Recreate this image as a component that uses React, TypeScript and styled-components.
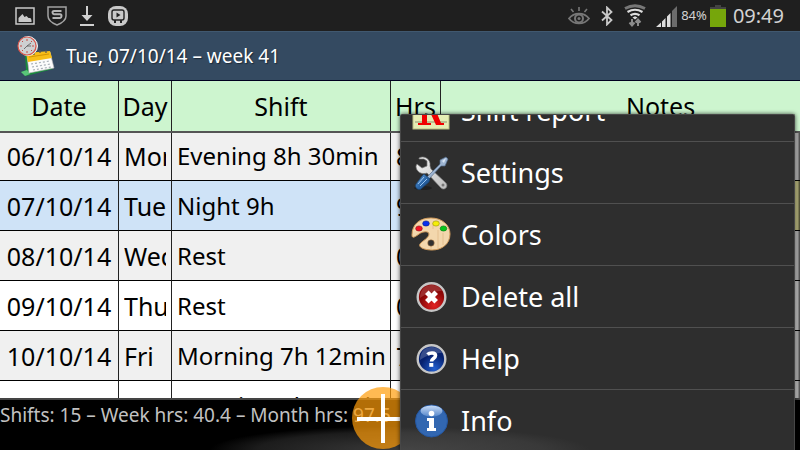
import React from "react";
import styled, { createGlobalStyle, css } from "styled-components";

const Global = createGlobalStyle`
  * { box-sizing: border-box; }
  html, body, #root { height: 100%; margin: 0; }
  body { background: #000; overflow: hidden; font-family: "Noto Sans", sans-serif; }
`;

const Screen = styled.div`
  position: relative;
  display: flex;
  flex-direction: column;
  height: 100vh;
  overflow: hidden;
  background: #000;
`;

const StatusBar = styled.header`
  display: flex;
  align-items: center;
  justify-content: space-between;
  flex: none;
  height: 31px;
  padding: 0 16px 0 15px;
  background: #1f1f1f;
  color: #d2d2d2;
`;

const Notifications = styled.div`
  display: flex;
  align-items: center;
  gap: 12px;
`;

const Indicators = styled.div`
  display: flex;
  align-items: center;
  gap: 3px;
`;

const IndicatorIcons = styled.div`
  display: flex;
  align-items: center;
  gap: 10px;
`;

const Glyph = styled.svg`
  display: block;
  flex: none;
`;

const Percent = styled.span`
  font-size: 13px;
  line-height: 31px;
`;

const Clock = styled.time`
  margin-left: 4px;
  font-size: 20px;
  line-height: 31px;
`;

const TitleBar = styled.div`
  display: flex;
  align-items: center;
  gap: 8px;
  flex: none;
  height: 50px;
  padding-left: 16px;
  background: #344a61;
  border-top: 1px solid #40586f;
  border-bottom: 1px solid #000020;
`;

const Title = styled.h1`
  margin: 0;
  color: #fff;
  font-size: 19px;
  font-weight: 400;
  line-height: 48px;
  text-shadow: 1px 1px 1px #1c2a38;
`;

const TableArea = styled.main`
  position: relative;
  flex: 1;
  min-height: 0;
  overflow: hidden;
  background: #fff;
  border-bottom: 2px solid #444;
`;

const ShiftTable = styled.table`
  width: 110%;
  table-layout: fixed;
  border-collapse: separate;
  border-spacing: 0;
  color: #000;
`;

const Column = styled.col<{ $width?: number }>`
  ${(p) => p.$width && css`width: ${p.$width}px;`}
`;

const HeadCell = styled.th`
  position: relative;
  height: 50px;
  padding: 0;
  background: #cdf5cf;
  border-right: 1px solid #222;
  box-shadow: 0 2px 0 #555;
  font-size: 25px;
  font-weight: 400;
  line-height: 50px;
  &:last-child { border-right: 0; }
`;

const BodyRow = styled.tr<{ $tone: string }>`
  background: ${(p) => p.$tone};
`;

const BodyCell = styled.td<{ $compact?: boolean; $center?: boolean; $tone?: string }>`
  height: 50px;
  padding: 0 5px;
  border-right: 1px solid #222;
  border-bottom: 1px solid #000;
  background: ${(p) => p.$tone ?? "transparent"};
  font-size: ${(p) => (p.$compact ? 24 : 25)}px;
  line-height: 48px;
  ${(p) => p.$center && css`padding: 0; text-align: center;`}
  &:last-child { border-right: 0; }
`;

const Clip = styled.div`
  overflow: hidden;
  white-space: nowrap;
`;

const ScrollThumb = styled.div`
  position: absolute;
  top: 52px;
  right: 0;
  bottom: 0;
  width: 5px;
  background: linear-gradient(to right, rgba(0, 0, 0, 0.15), rgba(0, 0, 0, 0.3) 50%, rgba(0, 0, 0, 0.75));
`;

const Footer = styled.footer`
  flex: none;
  height: 50px;
  overflow: hidden;
  background: radial-gradient(ellipse 190px 24px at 50% 100%, #3a3a3a, #1c1c1c 75%, #000);
  color: #c2c2c2;
  font-size: 19px;
  line-height: 30px;
  white-space: nowrap;
`;

const AddButton = styled.button`
  position: absolute;
  left: calc(50% - 48px);
  bottom: 1px;
  width: 62px;
  height: 62px;
  padding: 0;
  border: 0;
  border-radius: 50%;
  background: rgba(255, 157, 10, 0.7);
`;

const Menu = styled.nav`
  position: absolute;
  top: 114px;
  right: 5px;
  bottom: -1px;
  left: 50%;
  display: flex;
  flex-direction: column;
  justify-content: flex-end;
  overflow: hidden;
  border: 1px solid #474747;
  border-bottom: 0;
  border-radius: 2px 2px 0 0;
  background: radial-gradient(ellipse 190px 24px at 0 100%, #454545, #393939 75%, #2e2e2e);
  box-shadow: 0 0 4px rgba(0, 0, 0, 0.7);
`;

const MenuItem = styled.button`
  display: flex;
  align-items: center;
  gap: 10px;
  flex: none;
  height: 62px;
  padding: 0 10px;
  border: 0;
  border-top: 1px solid #505050;
  background: transparent;
  color: #fff;
  font-family: inherit;
  font-size: 27px;
  line-height: 60px;
  text-align: left;
`;

const ReportIcon = () => (
  <Glyph width="40" height="40" viewBox="0 0 40 40" aria-hidden="true">
    <rect x="2" y="1" width="36" height="37" fill="#e5edb4" stroke="#b9bd82" />
    <path d="M4 10h32M4 20h32M4 31h32" stroke="#8d9270" />
    <path d="M10 6h12c10 0 11 12 3 14l5 12h3v2h-8l-6-13h-3v11h4v2H7v-2h4V8h-1zM16 8v11h4c7 0 7-11 0-11z" fill="#f00000" fillRule="evenodd" />
  </Glyph>
);

const SettingsIcon = () => (
  <Glyph width="40" height="40" viewBox="0 0 40 40" aria-hidden="true">
    <defs>
      <linearGradient id="steel" x1="0" y1="0" x2="1" y2="1">
        <stop stopColor="#f5f5f5" /><stop offset="1" stopColor="#bcbcbc" />
      </linearGradient>
      <linearGradient id="handle" x1="0" y1="0" x2="1" y2="1">
        <stop stopColor="#78a9db" /><stop offset=".5" stopColor="#2c68aa" /><stop offset="1" stopColor="#153d70" />
      </linearGradient>
    </defs>
    <ellipse cx="12" cy="35" rx="9" ry="2" fill="#202020" />
    <path d="M8 5c5-3 12 1 11 8l1 3 15 14c3 4-2 8-5 5L16 20c-5 2-11-1-11-7l1-2 5 4 5-2 0-5-3-2-5 0z" fill="url(#steel)" stroke="#777" strokeWidth=".7" />
    <circle cx="32" cy="32" r="1.5" fill="#777" />
    <path d="M15 25 29 11l0-4 6-3 2 2-3 7-4 0-13 14z" fill="#9db4d1" stroke="#516a8a" strokeWidth=".7" />
    <path d="M31 8l4-3-2 5z" fill="#d8e5f4" />
    <path d="M13 21l6 5-1 3-8 7c-3 2-7-2-5-5l6-8z" fill="url(#handle)" stroke="#17406d" strokeWidth=".7" />
    <path d="M13 24l-6 7M16 26l-7 7" stroke="#99c4ef" strokeWidth="1" />
  </Glyph>
);

const ColorsIcon = () => (
  <Glyph width="40" height="40" viewBox="0 0 40 40" aria-hidden="true">
    <path d="M1 20C1 9 9 3 20 3s19 7 19 16c0 10-8 16-18 16-8 0-14-3-12-6 2-3 9-6 9-10 0-3-6-3-10 0-4 3-7 5-7 1z" fill="#f3d7ad" stroke="#d29c5b" strokeWidth="1" />
    <path d="M22 8v6M27 15v18M32 18v12M20 31v4" stroke="#dfb988" strokeWidth=".8" />
    <circle cx="20" cy="28" r="3.3" fill="#303030" stroke="#c78e50" strokeWidth=".5" />
    <ellipse cx="8" cy="13.500" rx="3.300" ry="2.600" fill="#f11424" stroke="#8d151a" strokeWidth=".6" />
    <ellipse cx="15" cy="8.500" rx="3.300" ry="2.600" fill="#0830ed" stroke="#081c8a" strokeWidth=".6" />
    <ellipse cx="25" cy="8.500" rx="3.300" ry="2.600" fill="#f5ee08" stroke="#98930a" strokeWidth=".6" />
    <ellipse cx="32.500" cy="13.500" rx="3.300" ry="2.600" fill="#08c51c" stroke="#077913" strokeWidth=".6" />
  </Glyph>
);

const DeleteIcon = () => (
  <Glyph width="40" height="40" viewBox="0 0 40 40" aria-hidden="true">
    <defs>
      <radialGradient id="red" cx=".6" cy=".8"><stop stopColor="#e32222" /><stop offset="1" stopColor="#8b0707" /></radialGradient>
    </defs>
    <circle cx="20.500" cy="20" r="13.800" fill="url(#red)" stroke="#c6c6c6" strokeWidth="2.400" />
    <path d="M9 21C9 5 27 5 31 14c-7 0-15 2-22 7z" fill="#fff" opacity=".16" />
    <path d="M15.800 15.300l9.400 9.400M25.200 15.300l-9.400 9.400" stroke="#fff" strokeWidth="5" />
  </Glyph>
);

const HelpIcon = () => (
  <Glyph width="40" height="40" viewBox="0 0 40 40" aria-hidden="true">
    <defs>
      <radialGradient id="navy" cx=".6" cy=".85"><stop stopColor="#225fd0" /><stop offset="1" stopColor="#06216f" /></radialGradient>
    </defs>
    <circle cx="20.500" cy="20" r="13.800" fill="url(#navy)" stroke="#c6c6c6" strokeWidth="2.400" />
    <path d="M9 21C9 5 27 5 31 14c-7 0-15 2-22 7z" fill="#fff" opacity=".2" />
    <path d="M16.500 15.500c2-2 8-2.500 8 1 0 3-4 3-4 6" fill="none" stroke="#fff" strokeWidth="3.600" />
    <rect x="18.300" y="24" width="4" height="3.800" fill="#fff" />
  </Glyph>
);

const InfoIcon = () => (
  <Glyph width="40" height="40" viewBox="0 0 40 40" aria-hidden="true">
    <defs>
      <linearGradient id="shine" x1="0" y1="0" x2="0" y2="1"><stop stopColor="#c8dcf7" /><stop offset="1" stopColor="#5788cb" /></linearGradient>
    </defs>
    <circle cx="20.500" cy="20" r="16" fill="#3267b1" stroke="#2456a0" />
    <ellipse cx="20.500" cy="10" rx="11" ry="5.500" fill="url(#shine)" />
    <circle cx="20.500" cy="12.500" r="2.800" fill="#fff" />
    <path d="M16 17h7v10h2v3h-9v-3h2v-7h-2z" fill="#fff" />
  </Glyph>
);

const CalendarClock = () => (
  <Glyph width="42" height="42" viewBox="0 0 42 42" aria-hidden="true">
    <path d="M9 20 10 35l-5 2 5 4 27-7-2-4-23 4-1-14z" fill="#188b3b" />
    <path d="M5 37l6-2 3 4-5 2z" fill="#5ac579" />
    <path d="m11 20 23-3 4 16-25 5z" fill="#fbfbfb" stroke="#b8b8b8" strokeWidth=".6" />
    <path d="m10 18 24-2 2 7-24 4z" fill="#f7be18" />
    <path d="m13 22 20-3" stroke="#d59500" />
    <path d="m15 29 19-3M16 32l19-3M17 35l18-3" stroke="#a9b0b8" strokeWidth="1.200" strokeDasharray="2 2" />
    <path d="M18 20v-3M24 18v-3M30 18v-3" stroke="#555" strokeWidth="1.200" />
    <circle cx="12" cy="11" r="9.500" fill="#ced0d1" stroke="#f1f1f1" strokeWidth="1" />
    <circle cx="11" cy="11" r="9" fill="none" stroke="#d85449" strokeWidth="1.200" />
    <path d="M11 4v2M11 16v2M4 11h2M16 11h2M6 6l1 1M15 15l1 1M16 6l-1 1M6 16l1-1" stroke="#c64a43" />
    <path d="M11 11l4-3M11 11l-3 3M11 11h4" stroke="#555" strokeWidth=".8" />
  </Glyph>
);

const PictureIcon = () => (
  <Glyph width="20" height="18" viewBox="0 0 20 18" aria-hidden="true">
    <rect x="1" y="1" width="18" height="16" fill="none" stroke="#c9c9c9" strokeWidth="1.500" />
    <path d="M3.500 15v-4l4-4 2 3 2-1 2 2h2l1 2v2z" fill="#c9c9c9" />
  </Glyph>
);

const ShieldIcon = () => (
  <Glyph width="20" height="20" viewBox="0 0 20 20" aria-hidden="true">
    <path d="M1 1h18v9c0 4-4 7-9 9-5-2-9-5-9-9z" fill="none" stroke="#a3a3a3" strokeWidth="1.500" />
    <path d="M14.500 5H7q-1.500 0-1.500 1.500T7 8.200h6q1.500 0 1.500 1.800T13 12H5.500" fill="none" stroke="#b4b4b4" strokeWidth="2" />
  </Glyph>
);

const DownloadIcon = () => (
  <Glyph width="16" height="22" viewBox="0 0 16 22" aria-hidden="true">
    <path d="M8 1v13" stroke="#d0d0d0" strokeWidth="2" />
    <path d="M2.500 10h11L8 16z" fill="#d0d0d0" />
    <path d="M1 20h14" stroke="#d0d0d0" strokeWidth="2" />
  </Glyph>
);

const PlayIcon = () => (
  <Glyph width="22" height="22" viewBox="0 0 22 22" aria-hidden="true">
    <rect x="1" y="1" width="20" height="20" rx="8" fill="#c9c9c9" />
    <path d="M7 5h8q2 0 2 2v6q0 2-2 2H7q-2 0-2-2V7q0-2 2-2z" fill="none" stroke="#222" strokeWidth="1.400" />
    <path d="M9.500 7.500 13.500 10l-4 2.500z" fill="#222" />
    <path d="M7 15h2v3H7zM13 15h2v3h-2z" fill="#222" />
  </Glyph>
);

const EyeIcon = () => (
  <Glyph width="22" height="20" viewBox="0 0 22 20" aria-hidden="true">
    <path d="M1 12.500C6 6 16 6 21 12.500 16 19 6 19 1 12.500z" fill="none" stroke="#777" strokeWidth="1.800" />
    <circle cx="11" cy="12.500" r="4" fill="none" stroke="#777" strokeWidth="2" />
    <circle cx="11" cy="12.500" r="1.500" fill="#777" />
    <path d="M11 1v4M3 3l2.500 3M19 3l-2.500 3" stroke="#777" strokeWidth="1.600" />
  </Glyph>
);

const BluetoothIcon = () => (
  <Glyph width="14" height="20" viewBox="0 0 14 20" aria-hidden="true">
    <path d="M2 5.500 11.500 14 7 18.500v-17L11.500 6 2 14.500" fill="none" stroke="#c9c9c9" strokeWidth="1.800" />
  </Glyph>
);

const WifiIcon = () => (
  <Glyph width="22" height="24" viewBox="0 0 22 24" aria-hidden="true">
    <path d="M1 4.500Q11-1 21 4.500" fill="none" stroke="#777" strokeWidth="2.800" />
    <path d="M3.500 8q7.500-4.500 15 0M6.500 11.300q4.500-2.800 9 0" fill="none" stroke="#ddd" strokeWidth="2.200" />
    <path d="m8.500 13.500 2.500-1.200 2.500 1.200-2.500 2z" fill="#ddd" />
    <path d="M8 15v6M5.500 18.500 8 21.500l2.500-3M14 22v-6M11.500 18.500 14 15.500l2.500 3" fill="none" stroke="#8c8c8c" strokeWidth="2" />
  </Glyph>
);

const SignalIcon = () => (
  <Glyph width="22" height="22" viewBox="0 0 22 22" aria-hidden="true">
    <path d="M0 22l5-4.500V22zM6 22v-5.500L9.500 13v9zM11 22V11.500l3.500-3.500V22z" fill="#ddd" />
    <path d="M16 22V6l5-5v21z" fill="#6c6c6c" />
  </Glyph>
);

const BatteryIcon = () => (
  <Glyph width="16" height="22" viewBox="0 0 16 22" aria-hidden="true">
    <path d="M5 0h6v2h5v3H0V2h5z" fill="#434343" />
    <rect y="4" width="16" height="18" fill="#76a60b" />
  </Glyph>
);

const PlusIcon = () => (
  <Glyph width="62" height="62" viewBox="0 0 62 62" aria-hidden="true">
    <path d="M31 7v49M5 32h52" stroke="#fff" strokeWidth="4" />
  </Glyph>
);

const shifts = [
  { date: "06/10/14", day: "Mon", shift: "Evening 8h 30min", hours: "8.5", tone: "#f0f0f0" },
  { date: "07/10/14", day: "Tue", shift: "Night 9h", hours: "9", tone: "#cfe3f7", noteTone: "#f5f2a8" },
  { date: "08/10/14", day: "Wed", shift: "Rest", hours: "0", tone: "#f0f0f0" },
  { date: "09/10/14", day: "Thu", shift: "Rest", hours: "0", tone: "#ffffff" },
  { date: "10/10/14", day: "Fri", shift: "Morning 7h 12min", hours: "7.2", tone: "#f0f0f0" },
  { date: "11/10/14", day: "Sat", shift: "Morning 7h 12min", hours: "7.2", tone: "#ffffff" },
];

const menuItems = [
  { label: "Shift report", Icon: ReportIcon },
  { label: "Settings", Icon: SettingsIcon },
  { label: "Colors", Icon: ColorsIcon },
  { label: "Delete all", Icon: DeleteIcon },
  { label: "Help", Icon: HelpIcon },
  { label: "Info", Icon: InfoIcon },
];

export default function App() {
  return (
    <Screen>
      <Global />
      <StatusBar>
        <Notifications>
          <PictureIcon />
          <ShieldIcon />
          <DownloadIcon />
          <PlayIcon />
        </Notifications>
        <Indicators>
          <IndicatorIcons>
            <EyeIcon />
            <BluetoothIcon />
            <WifiIcon />
            <SignalIcon />
          </IndicatorIcons>
          <Percent>84%</Percent>
          <BatteryIcon />
          <Clock>09:49</Clock>
        </Indicators>
      </StatusBar>
      <TitleBar>
        <CalendarClock />
        <Title>Tue, 07/10/14 – week 41</Title>
      </TitleBar>
      <TableArea>
        <ShiftTable>
          <colgroup>
            <Column $width={119} />
            <Column $width={53} />
            <Column $width={219} />
            <Column $width={50} />
            <Column />
          </colgroup>
          <thead>
            <tr>
              <HeadCell>Date</HeadCell>
              <HeadCell>Day</HeadCell>
              <HeadCell>Shift</HeadCell>
              <HeadCell>Hrs</HeadCell>
              <HeadCell>Notes</HeadCell>
            </tr>
          </thead>
          <tbody>
            {shifts.map((s) => (
              <BodyRow key={s.date} $tone={s.tone}>
                <BodyCell $center>{s.date}</BodyCell>
                <BodyCell><Clip>{s.day}</Clip></BodyCell>
                <BodyCell $compact><Clip>{s.shift}</Clip></BodyCell>
                <BodyCell><Clip>{s.hours}</Clip></BodyCell>
                <BodyCell $tone={s.noteTone} />
              </BodyRow>
            ))}
          </tbody>
        </ShiftTable>
        <ScrollThumb />
      </TableArea>
      <Footer>Shifts: 15 – Week hrs: 40.4 – Month hrs: 97.5</Footer>
      <AddButton aria-label="Add shift"><PlusIcon /></AddButton>
      <Menu>
        {menuItems.map(({ label, Icon }) => (
          <MenuItem key={label}>
            <Icon />
            {label}
          </MenuItem>
        ))}
      </Menu>
    </Screen>
  );
}
